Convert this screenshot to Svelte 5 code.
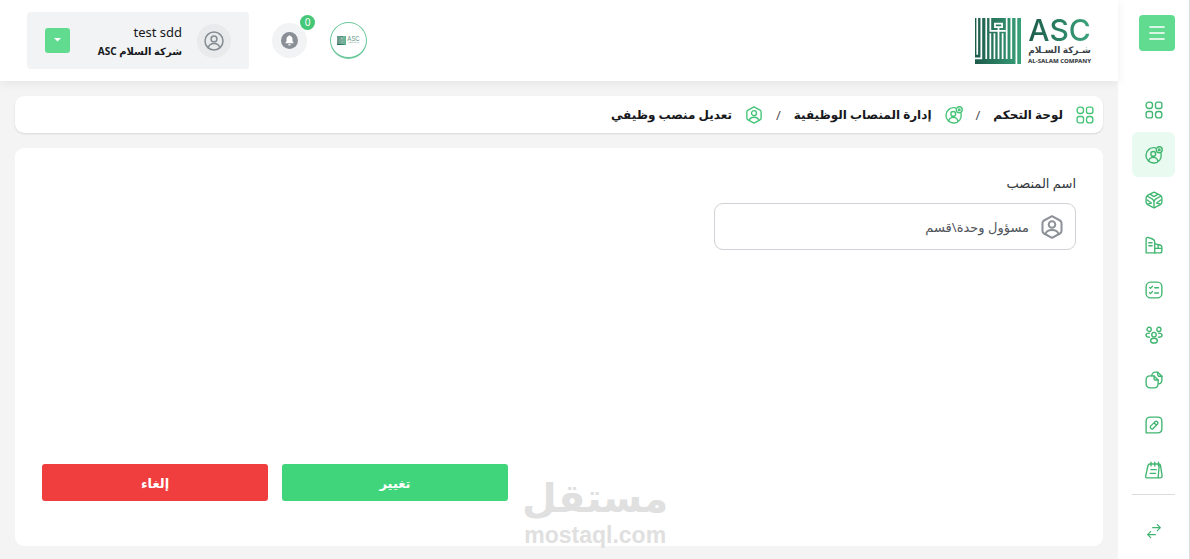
<script lang="ts">
	let position = 'مسؤول وحدة\\قسم';
	let activeLink = 'positions';

	const links = [
		{ id: 'dashboard', label: 'لوحة التحكم' },
		{ id: 'positions', label: 'إدارة المنصاب الوظيفية' },
		{ id: 'products', label: 'المنتجات' },
		{ id: 'branches', label: 'الفروع' },
		{ id: 'tasks', label: 'المهام' },
		{ id: 'teams', label: 'الموظفين' },
		{ id: 'files', label: 'الملفات' },
		{ id: 'edit', label: 'تعديل' },
		{ id: 'notes', label: 'الملاحظات' }
	];

	const crumbs = [
		{ icon: 'dashboard', label: 'لوحة التحكم' },
		{ icon: 'positions', label: 'إدارة المنصاب الوظيفية' },
		{ icon: 'badge', label: 'تعديل منصب وظيفي' }
	];
</script>

{#snippet icon(name: string)}
	<svg class="icon" viewBox="0 0 24 24" aria-hidden="true">
		{#if name === 'dashboard'}
			<rect x="1.5" y="1.5" width="8.5" height="8.5" rx="3.6" />
			<rect x="14" y="1.5" width="8.5" height="8.5" rx="2.6" />
			<rect x="1.5" y="14" width="8.5" height="8.5" rx="2.6" />
			<rect x="14" y="14" width="8.5" height="8.5" rx="3.6" />
		{:else if name === 'positions'}
			<path d="M14 2.6A10.2 10.2 0 1 0 21.4 10" />
			<circle cx="11" cy="10.5" r="3.2" />
			<path d="M4.8 20c1-3.6 3.4-4.8 6.200-4.800s5.200 1.200 6.200 4.800" />
			<circle cx="19" cy="5" r="4" />
			<circle cx="19" cy="5" r="1.2" />
		{:else if name === 'products'}
			<path d="M12 1.500l8 4q2.500 1.300 2.500 3.500v6q0 2.200-2.500 3.500l-8 4-8-4Q1.500 17.200 1.500 15V9q0-2.200 2.500-3.500z" />
			<path d="M3 7l6.500 3.500Q12 12 12 15v7M21 7l-6.500 3.500Q12 12 12 15M7 4.500l5 3 5-3" />
			<path d="M3 12l5.500 4-5 1.500M21 12l-5.500 4 5 1.500" />
		{:else if name === 'branches'}
			<path d="M1.500 22.500V4q0-2.500 2.500-2.200l6 2.200q3 1.200 3 4v14.500z" />
			<path d="M13 10.500l7 1.500q2.500.6 2.500 3v5q0 2.500-2.500 2.500h-7M5 9h4.500M5 13h4.500M13 16.500h9M17.500 12v4" />
		{:else if name === 'tasks'}
			<rect x="1.500" y="1.500" width="21" height="21" rx="6" />
			<path d="M6 8.500l1.300 1.300L10 7M6 15.500l1.300 1.300L10 14M13 9h5M13 16h5" />
		{:else if name === 'teams'}
			<circle cx="5.500" cy="4.500" r="2.800" />
			<circle cx="18.500" cy="4.500" r="2.800" />
			<circle cx="12" cy="11.500" r="3" />
			<path d="M6 15c-3 0-4.700-1-4.700-2.800S3 9.500 6 9.500M18 15c3 0 4.700-1 4.700-2.800S21 9.500 18 9.500" />
			<ellipse cx="12" cy="19.500" rx="4.500" ry="3.200" />
		{:else if name === 'files'}
			<path d="M9 6.500c0-3 2-5 5-5h3l5.500 5.500v5c0 3-2 5-4.500 5" />
			<path d="M7 6.500h5l5.500 5.500v5c0 3.500-2 5.500-5.500 5.500H7c-3.500 0-5.500-2-5.500-5.500v-5c0-3.500 2-5.500 5.500-5.500z" />
			<path d="M12 6.500v3q0 2.500 2.500 2.500h3M17 1.500v3q0 2.500 2.500 2.500h3" />
		{:else if name === 'edit'}
			<path d="M7 1.500h10c3.500 0 5.500 2 5.500 5.500v10c0 3.500-2 5.500-5.500 5.500H1.500V7c0-3.500 2-5.500 5.500-5.500z" />
			<path d="M7.500 13.500l6-6q1.500-1.200 3 .3t.3 3l-6 6q-1.500 1.200-3-.3t-.3-3zM12 9l3 3" />
		{:else if name === 'notes'}
			<path d="M6.500 4h12q1.800 0 2.200 2l2 13.500q.3 3-2.500 3H3q-2.500 0-2-3L4 6q.5-2 2.500-2z" />
			<path d="M19 5l-1.500 17M8 1.500v5M13 1.500v5M18 1.500v5M8 11.500h7M7 16.500h7" />
		{:else if name === 'switch'}
			<path d="M10 7h11.500M17 2.500L21.500 7 17 11.500M14 17.500H2.500M7 13l-4.500 4.500L7 22" />
		{:else if name === 'badge'}
			<path d="M12 1.200l8 4.300q1.500.8 1.500 2.500v8q0 1.700-1.500 2.500l-8 4.300-8-4.300Q2.500 17.700 2.500 16V8q0-1.700 1.500-2.500z" />
			<circle cx="12" cy="9.500" r="3.300" />
			<path d="M5.500 19c.8-3 3.500-4 6.500-4s5.700 1 6.500 4" />
		{:else if name === 'user'}
			<circle cx="12" cy="12" r="10.800" />
			<circle cx="12" cy="9.500" r="3.500" />
			<path d="M5 20c1-3.500 3.800-5 7-5s6 1.500 7 5" />
		{:else if name === 'menu'}
			<path d="M2.500 4h19M2.500 12h19M2.500 20h19" />
		{/if}
	</svg>
{/snippet}

{#snippet mark()}
	<svg class="mark" viewBox="0 0 45 45" aria-hidden="true">
		<defs>
			<linearGradient id="mark-fill" x1="0" x2="1">
				<stop offset="0" stop-color="#1d5a4a" />
				<stop offset="1" stop-color="#38a079" />
			</linearGradient>
		</defs>
		<rect width="45" height="45" fill="url(#mark-fill)" />
		<g fill="none" stroke="#fff" stroke-width="1.7">
			<path d="M2.200 0v36M6.200 0v39.500H0M11 0v40M15 0v12.500h15M15 15v25M19 15v25M23 9v31M27 15v25M31 0v40M35.500 0v40M40.500 0v45" />
			<path d="M19.500 9V5.500h7V9z" />
		</g>
	</svg>
{/snippet}

<div class="layout" dir="rtl">
	<aside class="sidebar">
		<button class="menu-btn" aria-label="القائمة">{@render icon('menu')}</button>
		<nav>
			<ul class="links">
				{#each links as link}
					<li>
						<a
							href="#{link.id}"
							class="link {activeLink === link.id ? 'active' : ''}"
							aria-label={link.label}
							on:click={() => (activeLink = link.id)}
						>
							{@render icon(link.id)}
						</a>
					</li>
				{/each}
			</ul>
			<a href="#switch" class="link switch" aria-label="تبديل">{@render icon('switch')}</a>
		</nav>
	</aside>

	<div class="page">
		<header class="header">
			<a href="#home" class="logo">
				{@render mark()}
				<span class="logo-text">
					<span class="logo-name">ASC</span>
					<span class="logo-ar">شـركة السـلام</span>
					<span class="logo-en">AL-SALAM COMPANY</span>
				</span>
			</a>

			<div class="header-tools">
				<button class="company" aria-label="الشركة">
					{@render mark()}
					<span class="company-text">
						<span class="company-name">ASC</span>
						<span class="company-ar">شركة السلام</span>
					</span>
				</button>

				<button class="bell" aria-label="الإشعارات">
					<svg viewBox="0 0 24 24" aria-hidden="true">
						<circle cx="12" cy="12" r="12" fill="#8a8f96" />
						<path
							fill="#fff"
							d="M12 4.500c.8 0 1.200.5 1.200 1.200 2 .6 3 2.200 3 4.300v3l1.600 2.200v.8H6.200v-.8L7.800 13v-3c0-2.100 1-3.700 3-4.300 0-.7.400-1.200 1.200-1.200zM10 17.200h4c-.2 1.200-1 1.800-2 1.800s-1.800-.6-2-1.800z"
						/>
					</svg>
					<span class="count">0</span>
				</button>

				<div class="user">
					<span class="avatar">{@render icon('user')}</span>
					<div class="user-info">
						<span class="user-name">test sdd</span>
						<span class="user-company">شركة السلام ASC</span>
					</div>
					<button class="user-btn" aria-label="خيارات المستخدم">
						<svg viewBox="0 0 8 5" aria-hidden="true"><path fill="#fff" d="M0 0h8L4 4z" /></svg>
					</button>
				</div>
			</div>
		</header>

		<main class="content">
			<nav class="crumbs">
				{#each crumbs as crumb, i}
					{#if i > 0}<span class="slash">/</span>{/if}
					<a href="#{crumb.icon}" class="crumb">
						{@render icon(crumb.icon)}
						<span>{crumb.label}</span>
					</a>
				{/each}
			</nav>

			<form class="card" on:submit|preventDefault>
				<label class="label" for="position">اسم المنصب</label>
				<div class="field">
					{@render icon('badge')}
					<input id="position" type="text" bind:value={position} />
				</div>

				<div class="actions">
					<button type="submit" class="btn save">تغيير</button>
					<button type="button" class="btn cancel">إلغاء</button>
				</div>
			</form>
		</main>
	</div>

	<div class="watermark">
		<span class="watermark-ar">مستقل</span>
		<span class="watermark-en" dir="ltr">mostaql.com</span>
	</div>
</div>

<style>
	:global(body) {
		margin: 0;
		background: #f4f4f4;
	}

	.layout {
		position: relative;
		display: flex;
		min-height: 100vh;
		font-family: 'Noto Sans', 'DejaVu Sans', sans-serif;
		font-size: 13px;
		color: #16181c;
	}

	.layout * {
		box-sizing: border-box;
	}

	a {
		color: inherit;
		text-decoration: none;
	}

	button,
	input {
		font: inherit;
		border: none;
		padding: 0;
	}

	button {
		cursor: pointer;
	}

	.icon {
		width: 18px;
		height: 18px;
		flex-shrink: 0;
		fill: none;
		stroke: currentColor;
		stroke-width: 1.8;
		stroke-linecap: round;
		stroke-linejoin: round;
	}

	/* sidebar */
	.sidebar {
		width: 72px;
		flex-shrink: 0;
		padding: 15px 14px 0;
		background: #fff;
		border-right: 1px solid #dedede;
	}

	.menu-btn {
		display: flex;
		align-items: center;
		justify-content: center;
		width: 36px;
		height: 36px;
		margin-bottom: 36px;
		border-radius: 4px;
		background: #60db8f;
		color: #fff;
	}

	.links {
		list-style: none;
		margin: 0;
		padding: 0 0 2px;
		border-bottom: 1px solid #dcdcdc;
	}

	.link {
		display: flex;
		align-items: center;
		justify-content: center;
		height: 45px;
		border-radius: 6px;
		color: #3fb56f;
	}

	.link.active {
		background: #e9faf0;
	}

	.switch {
		margin-top: 13px;
	}

	.switch .icon {
		width: 16px;
		height: 16px;
	}

	/* header */
	.page {
		display: flex;
		flex-direction: column;
		flex: 1;
		min-width: 0;
	}

	.header {
		display: flex;
		align-items: center;
		justify-content: space-between;
		padding: 12px 27px;
		background: #fff;
		box-shadow: 0 2px 10px rgba(0, 0, 0, 0.07);
	}

	.logo {
		display: flex;
		align-items: center;
		flex-direction: row-reverse;
		gap: 7px;
	}

	.mark {
		width: 46px;
		height: 46px;
	}

	.logo-text {
		display: flex;
		flex-direction: column;
		align-items: center;
		color: #3c4347;
		white-space: nowrap;
	}

	.logo-name {
		font-family: Inter, sans-serif;
		font-size: 30px;
		font-weight: 500;
		line-height: 26px;
		background: linear-gradient(90deg, #1d5a4a, #3ba57d);
		background-clip: text;
		color: transparent;
	}

	.logo-ar {
		font-size: 9px;
		font-weight: 600;
		line-height: 14px;
	}

	.logo-en {
		font-size: 6px;
		font-weight: 800;
		line-height: 8px;
	}

	.header-tools {
		display: flex;
		align-items: center;
		gap: 23px;
	}

	.company {
		display: flex;
		align-items: center;
		justify-content: center;
		flex-direction: row-reverse;
		gap: 1px;
		width: 37px;
		height: 37px;
		border: 1px solid #6cc79a;
		border-bottom-width: 2px;
		border-radius: 50%;
		background: #fff;
	}

	.company .mark {
		width: 9px;
		height: 9px;
	}

	.company-text {
		display: flex;
		flex-direction: column;
		color: #5b8f7c;
	}

	.company-name {
		font-family: Inter, sans-serif;
		font-size: 6px;
		line-height: 5px;
	}

	.company-ar {
		font-size: 2px;
		line-height: 4px;
	}

	.bell {
		position: relative;
		display: flex;
		align-items: center;
		justify-content: center;
		width: 35px;
		height: 35px;
		border-radius: 50%;
		background: #f1f3f4;
	}

	.bell svg {
		width: 17px;
		height: 17px;
	}

	.count {
		position: absolute;
		top: -8px;
		right: -8px;
		width: 15px;
		height: 15px;
		border-radius: 50%;
		background: #44c777;
		color: #fff;
		font-size: 10px;
		line-height: 15px;
		text-align: center;
	}

	.user {
		display: flex;
		align-items: center;
		gap: 15px;
		width: 222px;
		height: 57px;
		padding: 0 18px;
		border-radius: 4px;
		background: #f1f3f5;
	}

	.avatar {
		display: flex;
		align-items: center;
		justify-content: center;
		width: 34px;
		height: 34px;
		border-radius: 50%;
		background: #e8eaec;
		color: #868c94;
	}

	.avatar .icon {
		width: 20px;
		height: 20px;
	}

	.user-info {
		display: flex;
		flex-direction: column;
		white-space: nowrap;
	}

	.user-name {
		line-height: 20px;
		text-align: right;
	}

	.user-company {
		font-size: 10px;
		font-weight: 700;
		line-height: 18px;
	}

	.user-btn {
		display: flex;
		align-items: center;
		justify-content: center;
		width: 25px;
		height: 25px;
		margin-right: auto;
		border-radius: 3px;
		background: #60db8f;
	}

	.user-btn svg {
		width: 7px;
	}

	/* content */
	.content {
		display: flex;
		flex-direction: column;
		flex: 1;
		gap: 15px;
		padding: 15px 15px 13px;
	}

	.crumbs {
		display: flex;
		align-items: center;
		gap: 13px;
		height: 37px;
		padding: 0 9px;
		border-radius: 9px;
		background: #fff;
		box-shadow: 0 1px 2px rgba(0, 0, 0, 0.12);
	}

	.crumb {
		display: flex;
		align-items: center;
		gap: 13px;
		font-size: 12px;
		font-weight: 700;
	}

	.crumb .icon {
		color: #45c377;
	}

	.slash {
		color: #555;
	}

	.card {
		display: flex;
		flex-direction: column;
		flex: 1;
		padding: 25px 27px 45px;
		border-radius: 9px;
		background: #fff;
	}

	.label {
		align-self: flex-start;
		line-height: 20px;
		color: #33373c;
	}

	.field {
		display: flex;
		align-items: center;
		gap: 11px;
		width: 35%;
		height: 47px;
		margin-top: 10px;
		padding: 0 11px;
		border: 1px solid #cfd2d6;
		border-radius: 9px;
	}

	.field .icon {
		width: 24px;
		height: 24px;
		color: #8b9197;
		stroke-width: 2;
	}

	.field input {
		flex: 1;
		min-width: 0;
		background: none;
		color: #50555b;
		outline: none;
	}

	.actions {
		display: flex;
		justify-content: flex-end;
		gap: 14px;
		margin-top: auto;
	}

	.btn {
		width: 226px;
		height: 37px;
		border-radius: 3px;
		color: #fff;
		font-weight: 600;
	}

	.save {
		background: #40d57a;
	}

	.cancel {
		background: #f03e3e;
	}

	.watermark {
		position: absolute;
		bottom: 8px;
		left: 522px;
		display: flex;
		flex-direction: column;
		align-items: center;
		color: #e0e0e0;
		font-weight: 700;
		pointer-events: none;
	}

	.watermark-ar {
		font-size: 40px;
		line-height: 44px;
	}

	.watermark-en {
		font-family: 'Liberation Sans', sans-serif;
		font-size: 23px;
		line-height: 32px;
	}
</style>
